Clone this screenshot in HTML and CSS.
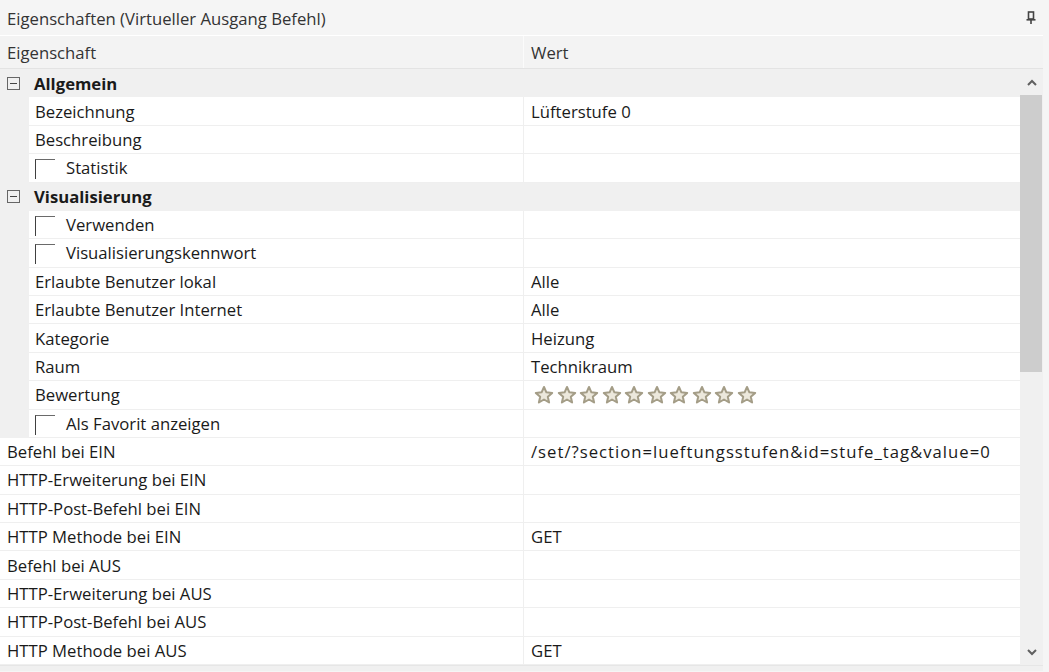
FILE: index.html
```html
<!DOCTYPE html>
<html lang="de">
<head>
<meta charset="utf-8">
<title>Eigenschaften</title>
<link rel="stylesheet" href="styles.css">
</head>
<body>
<div class="panel">
  <div class="titlebar">
    <span class="title">Eigenschaften (Virtueller Ausgang Befehl)</span>
    <svg class="pin" width="10" height="14" viewBox="0 0 10 14">
      <rect x="2.5" y="1" width="5" height="7" fill="none" stroke="#444" stroke-width="1.6"/>
      <rect x="0.5" y="8" width="9" height="1.6" fill="#444"/>
      <rect x="4.2" y="9" width="1.6" height="4" fill="#444"/>
    </svg>
  </div>
  <div class="header">
    <div class="hcell hname">Eigenschaft</div>
    <div class="hcell hval">Wert</div>
  </div>
  <div class="body">
    <div class="rows">
      <div class="row cat"><span class="toggle"></span><span class="catname">Allgemein</span></div>
      <div class="row child"><div class="gut"></div><div class="name">Bezeichnung</div><div class="val">Lüfterstufe 0</div></div>
      <div class="row child"><div class="gut"></div><div class="name">Beschreibung</div><div class="val"></div></div>
      <div class="row child"><div class="gut"></div><div class="name chk"><span class="box"></span>Statistik</div><div class="val"></div></div>
      <div class="row cat"><span class="toggle"></span><span class="catname">Visualisierung</span></div>
      <div class="row child"><div class="gut"></div><div class="name chk"><span class="box"></span>Verwenden</div><div class="val"></div></div>
      <div class="row child"><div class="gut"></div><div class="name chk"><span class="box"></span>Visualisierungskennwort</div><div class="val"></div></div>
      <div class="row child"><div class="gut"></div><div class="name">Erlaubte Benutzer lokal</div><div class="val">Alle</div></div>
      <div class="row child"><div class="gut"></div><div class="name">Erlaubte Benutzer Internet</div><div class="val">Alle</div></div>
      <div class="row child"><div class="gut"></div><div class="name">Kategorie</div><div class="val">Heizung</div></div>
      <div class="row child"><div class="gut"></div><div class="name">Raum</div><div class="val">Technikraum</div></div>
      <div class="row child"><div class="gut"></div><div class="name">Bewertung</div><div class="val stars" id="stars"></div></div>
      <div class="row child"><div class="gut"></div><div class="name chk"><span class="box"></span>Als Favorit anzeigen</div><div class="val"></div></div>
      <div class="row top"><div class="name">Befehl bei EIN</div><div class="val url">/set/?section=lueftungsstufen&amp;id=stufe_tag&amp;value=0</div></div>
      <div class="row top"><div class="name">HTTP-Erweiterung bei EIN</div><div class="val"></div></div>
      <div class="row top"><div class="name">HTTP-Post-Befehl bei EIN</div><div class="val"></div></div>
      <div class="row top"><div class="name">HTTP Methode bei EIN</div><div class="val">GET</div></div>
      <div class="row top"><div class="name">Befehl bei AUS</div><div class="val"></div></div>
      <div class="row top"><div class="name">HTTP-Erweiterung bei AUS</div><div class="val"></div></div>
      <div class="row top"><div class="name">HTTP-Post-Befehl bei AUS</div><div class="val"></div></div>
      <div class="row top"><div class="name">HTTP Methode bei AUS</div><div class="val">GET</div></div>
    </div>
    <div class="scrollbar">
      <div class="sbtn">
        <svg width="10" height="7" viewBox="0 0 10 7"><path d="M1 6 L5 2 L9 6" fill="none" stroke="#606060" stroke-width="2"/></svg>
      </div>
      <div class="thumb"></div>
      <div class="track"></div>
      <div class="sbtn">
        <svg width="10" height="7" viewBox="0 0 10 7"><path d="M1 1 L5 5 L9 1" fill="none" stroke="#606060" stroke-width="2"/></svg>
      </div>
    </div>
  </div>
  <div class="footer"></div>
</div>
<script>
  (function () {
    var host = document.getElementById('stars');
    var svg = '<svg class="star" width="20" height="20" viewBox="0 0 20 20"><path d="M10 2 L12.4 7.3 L18.2 7.9 L13.8 11.8 L15.1 17.5 L10 14.5 L4.9 17.5 L6.2 11.8 L1.8 7.9 L7.6 7.3 Z" fill="#ece8dc" stroke="#a49d87" stroke-width="2" stroke-linejoin="round"/></svg>';
    var html = '';
    for (var i = 0; i < 10; i++) html += svg;
    host.innerHTML = html;
  })();
</script>
</body>
</html>
```

FILE: styles.css
```css
html, body {
  margin: 0;
  padding: 0;
}
body {
  background: #f5f5f5;
  font-family: "Open Sans", "Noto Sans", sans-serif;
  font-size: 16.7px;
  color: #1a1a1a;
  width: 1049px;
  height: 672px;
  overflow: hidden;
}
.panel {
  width: 1043px;
  display: flex;
  flex-direction: column;
}
.titlebar {
  height: 36px;
  display: flex;
  align-items: center;
  justify-content: space-between;
  padding: 0 7px 0 7px;
  box-sizing: border-box;
  border-bottom: 1px solid #ffffff;
  color: #333;
}
.title {
  margin-top: 1px;
}
.header {
  height: 33px;
  display: flex;
  background: #f3f3f3;
  border-bottom: 1px solid #e3e3e3;
  box-sizing: border-box;
  color: #333;
}
.hcell {
  display: flex;
  align-items: center;
}
.hname {
  width: 524px;
  padding-left: 7px;
  box-sizing: border-box;
  border-right: 1px solid #fbfbfb;
}
.hval {
  padding-left: 7px;
}
.body {
  height: 596px;
  display: flex;
}
.rows {
  width: 1020px;
  display: flex;
  flex-direction: column;
}
.row {
  flex: 1;
  display: flex;
  align-items: stretch;
  min-height: 0;
}
.row.cat {
  background: #f0f0f0;
  align-items: center;
}
.toggle {
  width: 13px;
  height: 13px;
  border: 1px solid #666;
  box-sizing: border-box;
  margin-left: 7px;
  margin-right: 14px;
  position: relative;
}
.toggle::after {
  content: "";
  position: absolute;
  left: 2px;
  right: 2px;
  top: 5px;
  height: 1px;
  background: #444;
}
.catname {
  font-weight: 700;
}
.gut {
  width: 29px;
  background: #f0f0f0;
  flex: none;
}
.name, .val {
  display: flex;
  align-items: center;
  background: #fff;
  border-bottom: 1px solid #efefef;
  box-sizing: border-box;
  white-space: nowrap;
}
.row.child .name {
  width: 495px;
  padding-left: 6px;
  border-right: 1px solid #efefef;
}
.row.top .name {
  width: 524px;
  padding-left: 7px;
  border-right: 1px solid #efefef;
}
.val {
  flex: 1;
  padding-left: 7px;
}
.val.url {
  letter-spacing: 1px;
}
.name.chk {
  padding-left: 3px;
}
.box {
  width: 20px;
  height: 20px;
  border-top: 1px solid #6a6a6a;
  border-left: 1px solid #404040;
  box-sizing: border-box;
  margin-right: 11px;
  margin-top: 3px;
  flex: none;
}
.stars {
  padding-left: 10px;
  gap: 2.5px;
}
.star {
  display: block;
  flex: none;
}
.scrollbar {
  width: 23px;
  background: #f0f0f0;
  display: flex;
  flex-direction: column;
}
.sbtn {
  height: 26px;
  display: flex;
  align-items: center;
  justify-content: center;
  flex: none;
}
.thumb {
  height: 277px;
  background: #cdcdcd;
  margin-right: 1px;
  flex: none;
}
.track {
  flex: 1;
}
.footer {
  height: 6px;
  border-top: 1px solid #e6e6e6;
  background: #f0f0f0;
  box-sizing: border-box;
}
```
